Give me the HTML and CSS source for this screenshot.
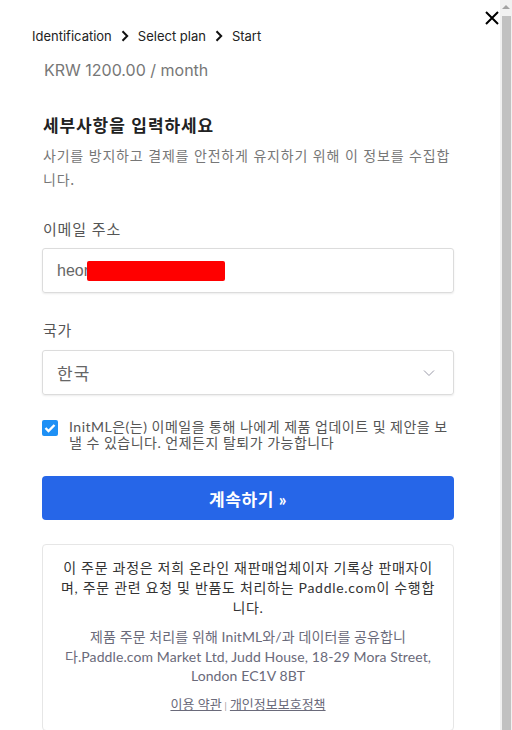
FILE: index.html
```html
<!DOCTYPE html>
<html lang="ko">
<head>
<meta charset="utf-8">
<link rel="stylesheet" href="styles.css">
</head>
<body>
<div class="page">
  <main class="content">
    <button class="close" aria-label="close">
      <svg width="14" height="14" viewBox="0 0 14 14"><path d="M1 1L13 13M13 1L1 13" stroke="#000" stroke-width="2" fill="none"/></svg>
    </button>
    <nav class="crumbs">
      <span>Identification</span>
      <svg class="chev" width="8" height="12" viewBox="0 0 8 12"><path d="M1.5 1.2L6.2 6L1.5 10.8" stroke="#111" stroke-width="2" fill="none"/></svg>
      <span>Select plan</span>
      <svg class="chev" width="8" height="12" viewBox="0 0 8 12"><path d="M1.5 1.2L6.2 6L1.5 10.8" stroke="#111" stroke-width="2" fill="none"/></svg>
      <span>Start</span>
    </nav>
    <div class="price">KRW 1200.00 / month</div>

    <section class="form">
      <h1 class="title">세부사항을 입력하세요</h1>
      <p class="desc">사기를 방지하고 결제를 안전하게 유지하기 위해 이 정보를 수집합니다.</p>

      <label class="label">이메일 주소</label>
      <div class="field"><span class="value">heor</span><span class="redact"></span></div>

      <label class="label label2">국가</label>
      <div class="field select"><span class="value">한국</span>
        <svg class="caret" width="12" height="8" viewBox="0 0 12 8"><path d="M1 1.5L6 6.5L11 1.5" stroke="#9a9aa8" stroke-width="1" fill="none"/></svg>
      </div>

      <div class="check">
        <span class="box"><svg width="12" height="10" viewBox="0 0 12 10"><path d="M1.5 5L4.5 8L10.5 2" stroke="#fff" stroke-width="2.4" fill="none"/></svg></span>
        <span class="check-text">InitML은(는) 이메일을 통해 나에게 제품 업데이트 및 제안을 보낼 수 있습니다. 언제든지 탈퇴가 가능합니다</span>
      </div>

      <button class="cta">계속하기 »</button>

      <div class="notice">
        <p class="n1">이 주문 과정은 저희 온라인 재판매업체이자 기록상 판매자이며, 주문 관련 요청 및 반품도 처리하는 Paddle.com이 수행합니다.</p>
        <p class="n2">제품 주문 처리를 위해 InitML와/과 데이터를 공유합니다.Paddle.com Market Ltd, Judd House, 18-29 Mora Street, London EC1V 8BT</p>
        <p class="links"><a href="#">이용 약관</a><span class="sep">|</span><a href="#">개인정보보호정책</a></p>
      </div>
    </section>
  </main>
  <div class="scrollbar">
    <div class="arrow"></div>
    <div class="thumb"></div>
  </div>
</div>
</body>
</html>
```

FILE: styles.css
```css
* { box-sizing: border-box; }
html, body { margin: 0; padding: 0; background: #fff; }
body {
  font-family: Lato, "Noto Sans CJK KR", sans-serif;
  color: #333;
}
.page {
  display: flex;
  width: 512px;
  height: 730px;
  overflow: hidden;
}
.content {
  position: relative;
  flex: 1;
  padding-top: 27px;
}
.close {
  position: absolute;
  top: 11px;
  right: 1px;
  width: 14px;
  height: 14px;
  padding: 0;
  border: 0;
  background: none;
  display: block;
}
.close svg { display: block; }
.crumbs {
  display: flex;
  align-items: center;
  gap: 8px;
  padding-left: 32px;
  font-family: Inter, "Noto Sans CJK KR", sans-serif;
  font-size: 13px;
  line-height: 18px;
  color: #222;
}
.crumbs .chev { margin: 0 1px 0 1px; }
.price {
  margin-top: 15px;
  padding-left: 44px;
  font-family: Inter, "Noto Sans CJK KR", sans-serif;
  font-size: 16px;
  line-height: 20px;
  color: #777;
}
.form {
  margin-left: 42px;
  width: 412px;
  display: flex;
  flex-direction: column;
}
.title {
  margin: 33px 0 0 1px;
  font-family: "Noto Sans CJK KR", sans-serif;
  font-size: 17px;
  line-height: 24px;
  font-weight: 700;
  letter-spacing: 0.9px;
  color: #222;
}
.desc {
  margin: 6px 0 0 1px;
  font-family: "Noto Sans CJK KR", sans-serif;
  font-size: 14px;
  line-height: 24px;
  letter-spacing: 0.8px;
  color: #777;
}
.label {
  margin: 28px 0 0 1px;
  font-family: "Noto Sans CJK KR", sans-serif;
  font-size: 15px;
  line-height: 20px;
  letter-spacing: 0.8px;
  color: #555;
}
.label2 { margin-top: 27px; }
.field {
  margin-top: 9px;
  height: 45px;
  border: 1px solid #dcdcdc;
  border-radius: 3px;
  box-shadow: 0 1px 2px rgba(0,0,0,0.08);
  display: flex;
  align-items: center;
  padding-left: 14px;
  padding-right: 18px;
}
.field.select { margin-top: 10px; justify-content: space-between; }
.value {
  font-family: "Liberation Sans", "Noto Sans CJK KR", sans-serif;
  font-size: 16px;
  color: #666;
}
.select .value { font-family: "Noto Sans CJK KR", sans-serif; font-size: 17px; letter-spacing: 1px; }
.redact {
  display: inline-block;
  width: 138px;
  height: 20px;
  background: #ff0000;
  border-radius: 2px;
  margin-left: -2px;
}
.check {
  margin-top: 24px;
  display: flex;
  align-items: flex-start;
  gap: 11px;
}
.box {
  flex: none;
  width: 16px;
  height: 16px;
  margin-top: 1px;
  border-radius: 2px;
  background: #1e90f5;
  display: flex;
  align-items: center;
  justify-content: center;
}
.box svg { display: block; }
.check-text {
  font-family: Lato, "Noto Sans CJK KR", sans-serif;
  font-size: 14px;
  line-height: 16px;
  letter-spacing: 0.5px;
  color: #555;
}
.cta {
  margin-top: 25px;
  height: 44px;
  border: 0;
  border-radius: 4px;
  background: #2666e8;
  color: #fff;
  font-family: Lato, "Noto Sans CJK KR", sans-serif;
  font-size: 17px;
  font-weight: 700;
  letter-spacing: 0.6px;
  padding: 0;
}
.notice {
  margin-top: 24px;
  border: 1px solid #e6e6e6;
  border-radius: 4px;
  padding: 13px 16px 15px;
  text-align: center;
}
.notice p { margin: 0; }
.n1 {
  font-size: 14px;
  line-height: 20px;
  letter-spacing: 0.7px;
  color: #333;
}
.n2 {
  margin-top: 9px !important;
  font-size: 14px;
  line-height: 19.5px;
  letter-spacing: 0.1px;
  color: #6a6a7a;
}
.links {
  margin-top: 9px !important;
  font-size: 13px;
  line-height: 18px;
  color: #777;
}
.links a { color: #6a6a7a; text-decoration: underline; }
.sep { font-size: 9px; margin: 0 3px; color: #999; }
.scrollbar {
  flex: none;
  width: 12px;
  height: 730px;
  background: #f1f1f1;
  display: flex;
  flex-direction: column;
  align-items: center;
  padding: 0 1px;
}
.arrow {
  flex: none;
  height: 15px;
  width: 10px;
  position: relative;
}
.arrow::before {
  content: "";
  position: absolute;
  left: 1px;
  top: 5px;
  border-left: 4px solid transparent;
  border-right: 4px solid transparent;
  border-bottom: 4px solid #a3a3a3;
}
.thumb {
  flex: 1;
  width: 9px;
  background: #c1c1c1;
  margin-top: 1px;
}
```
